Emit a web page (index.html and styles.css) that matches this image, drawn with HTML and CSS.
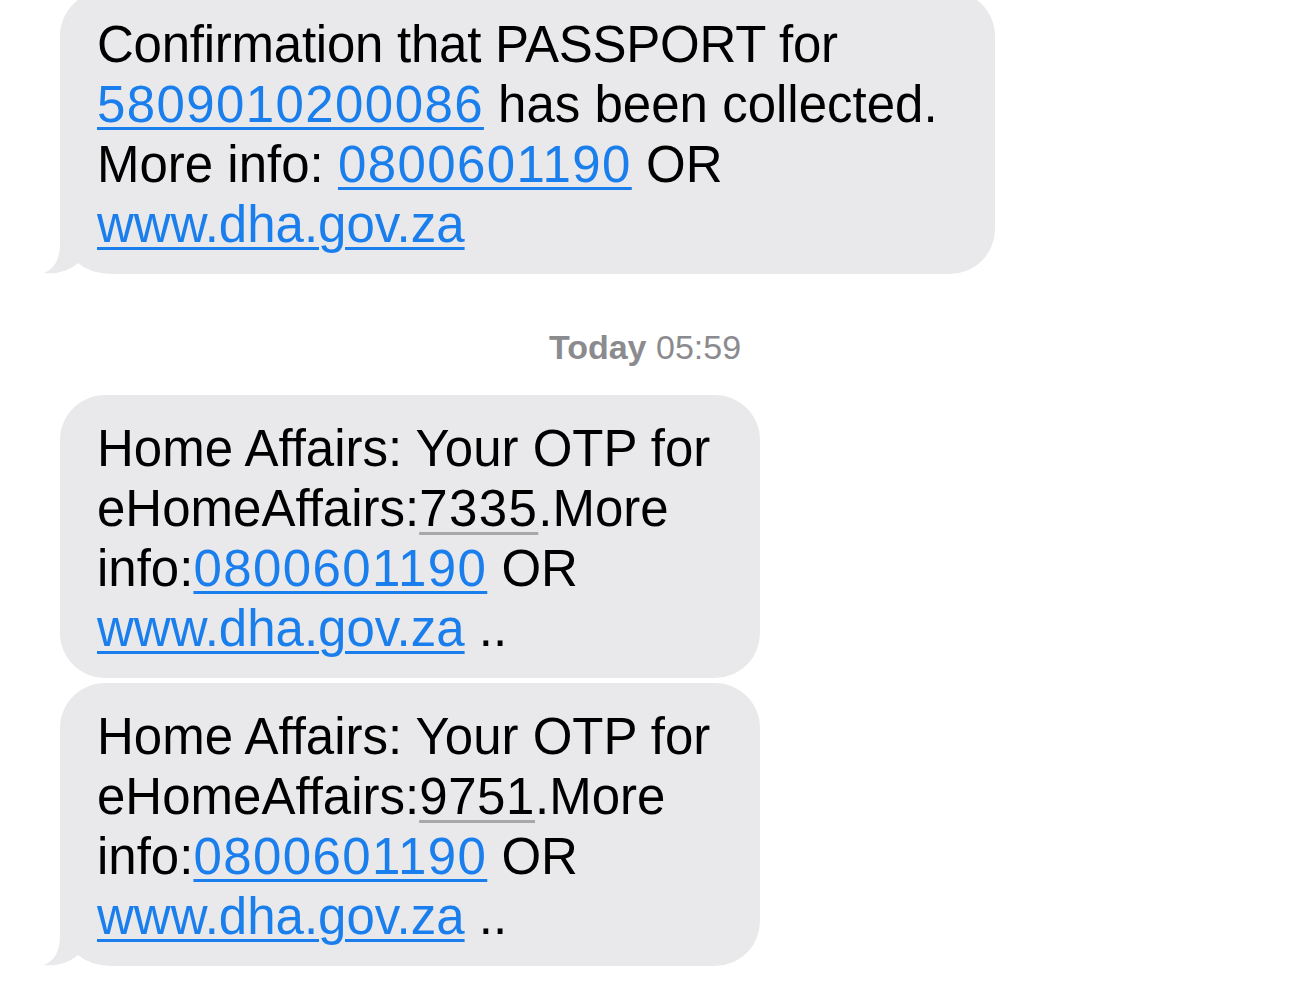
FILE: index.html
```html
<!DOCTYPE html>
<html>
<head>
<meta charset="utf-8">
<link rel="stylesheet" href="styles.css">
</head>
<body>
<main class="thread">
  <div class="bubble bubble-wide first tail">
    <svg class="tail-svg" width="80" height="50" viewBox="0 0 80 50"><rect x="0" y="0" width="80" height="50" fill="#ffffff"/><path d="M20,0 L20,18 C20,34 16,44 4,49 C16,50.5 29,47 38,39 C47,46 57,50 74,50 L80,50 L80,0 Z" fill="#e9e9eb"/></svg>
    <p class="msg"><span class="tight">Confirmation that PASSPORT for</span><br><a class="link num">5809010200086</a> has been collected.<br>More info: <a class="link num">0800601190</a> OR<br><a class="link">www.dha.gov.za</a></p>
  </div>

  <div class="stamp"><span class="stamp-day">Today</span> 05:59</div>

  <div class="bubble bubble-narrow">
    <p class="msg">Home Affairs: Your OTP for<br>eHomeAffairs:<span class="code num">7335</span>.More<br>info:<a class="link num">0800601190</a> OR<br><a class="link">www.dha.gov.za</a> ..</p>
  </div>

  <div class="bubble bubble-narrow second tail">
    <svg class="tail-svg" width="80" height="50" viewBox="0 0 80 50"><rect x="0" y="0" width="80" height="50" fill="#ffffff"/><path d="M20,0 L20,18 C20,34 16,44 4,49 C16,50.5 29,47 38,39 C47,46 57,50 74,50 L80,50 L80,0 Z" fill="#e9e9eb"/></svg>
    <p class="msg">Home Affairs: Your OTP for<br>eHomeAffairs:<span class="code num-small">9751</span>.More<br>info:<a class="link num">0800601190</a> OR<br><a class="link">www.dha.gov.za</a> ..</p>
  </div>
</main>
</body>
</html>
```

FILE: styles.css
```css
html, body {
  margin: 0;
  padding: 0;
  background: #ffffff;
}

body {
  width: 1290px;
  height: 1002px;
  overflow: hidden;
  font-family: "Liberation Sans", Arial, sans-serif;
}

.thread {
  display: flex;
  flex-direction: column;
  align-items: flex-start;
  padding-left: 60px;
}

.bubble {
  position: relative;
  background: #e9e9eb;
  border-radius: 45px;
  padding: 24px 0 19px 37px;
  box-sizing: border-box;
}

.bubble-wide {
  width: 935px;
}

.bubble-narrow {
  width: 700px;
}

.first {
  margin-top: -9px;
}

.second {
  margin-top: 5px;
}

.tail {
  border-bottom-left-radius: 0;
}

.tail-svg {
  position: absolute;
  left: -20px;
  bottom: 0;
  z-index: 0;
  display: block;
}

.msg {
  position: relative;
  z-index: 1;
  margin: 0;
  font-size: 51px;
  line-height: 60px;
  color: #000000;
  white-space: nowrap;
}

.tight {
  letter-spacing: -0.25px;
}

.num {
  letter-spacing: 1.4px;
}

.num-small {
  letter-spacing: 0.6px;
}

.link {
  color: #1a7fec;
  text-decoration: underline;
  text-decoration-thickness: 3px;
  text-underline-offset: 5px;
}

.code {
  text-decoration: underline;
  text-decoration-color: #a8a8aa;
  text-decoration-thickness: 3px;
  text-underline-offset: 6px;
}

.stamp {
  align-self: stretch;
  margin: 53px 0 27px -60px;
  text-align: center;
  font-size: 34px;
  line-height: 41px;
  color: #8b8b8f;
}

.stamp-day {
  font-weight: bold;
}
```
